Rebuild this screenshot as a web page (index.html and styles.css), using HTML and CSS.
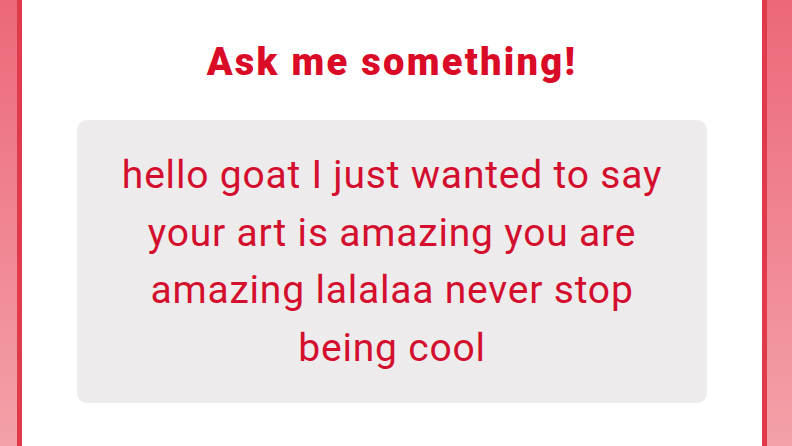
FILE: index.html
```html
<!DOCTYPE html>
<html>
<head>
<meta charset="utf-8">
<link rel="stylesheet" href="styles.css">
</head>
<body>
<div class="page">
  <div class="card">
    <h1 class="title">Ask me something!</h1>
    <div class="question">
      <p class="question-text">hello goat I just wanted to say your art is amazing you are amazing lalalaa never stop being cool</p>
    </div>
  </div>
</div>
</body>
</html>
```

FILE: styles.css
```css
html, body {
  margin: 0;
  padding: 0;
  height: 100%;
}
body {
  background: linear-gradient(180deg, #ec6879 0%, #f4a1a9 100%);
  font-family: Roboto, "Liberation Sans", sans-serif;
  overflow: hidden;
}
.page {
  display: flex;
  height: 446px;
  padding: 0 25px 0 17px;
}
.card {
  flex: 1;
  background: #ffffff;
  border-left: 5px solid #e13a4b;
  border-right: 5px solid #e13a4b;
  padding: 0 55px;
  display: flex;
  flex-direction: column;
}
.title {
  margin: 39px 0 35px;
  font-size: 38px;
  line-height: 46px;
  letter-spacing: 2.3px;
  font-weight: 900;
  color: #d90b27;
  text-align: center;
}
.question {
  background: #edebec;
  border-radius: 10px;
  padding: 27px 30px 26px;
}
.question-text {
  margin: 0;
  font-size: 39px;
  line-height: 57.5px;
  letter-spacing: 0.8px;
  color: #d40e2d;
  text-align: center;
}
```
